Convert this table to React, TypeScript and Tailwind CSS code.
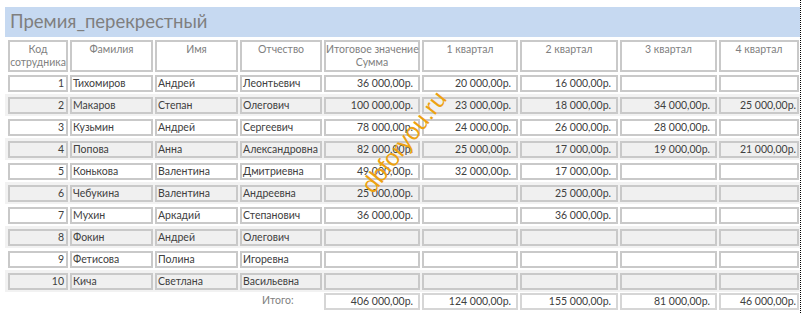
import React from 'react';

type Row = {
  id: number;
  last: string;
  first: string;
  middle: string;
  total: string;
  q: string[];
};

const rows: Row[] = [
  { id: 1, last: 'Тихомиров', first: 'Андрей', middle: 'Леонтьевич', total: '36 000,00р.', q: ['20 000,00р.', '16 000,00р.', '', ''] },
  { id: 2, last: 'Макаров', first: 'Степан', middle: 'Олегович', total: '100 000,00р.', q: ['23 000,00р.', '18 000,00р.', '34 000,00р.', '25 000,00р.'] },
  { id: 3, last: 'Кузьмин', first: 'Андрей', middle: 'Сергеевич', total: '78 000,00р.', q: ['24 000,00р.', '26 000,00р.', '28 000,00р.', ''] },
  { id: 4, last: 'Попова', first: 'Анна', middle: 'Александровна', total: '82 000,00р.', q: ['25 000,00р.', '17 000,00р.', '19 000,00р.', '21 000,00р.'] },
  { id: 5, last: 'Конькова', first: 'Валентина', middle: 'Дмитриевна', total: '49 000,00р.', q: ['32 000,00р.', '17 000,00р.', '', ''] },
  { id: 6, last: 'Чебукина', first: 'Валентина', middle: 'Андреевна', total: '25 000,00р.', q: ['', '25 000,00р.', '', ''] },
  { id: 7, last: 'Мухин', first: 'Аркадий', middle: 'Степанович', total: '36 000,00р.', q: ['', '36 000,00р.', '', ''] },
  { id: 8, last: 'Фокин', first: 'Андрей', middle: 'Олегович', total: '', q: ['', '', '', ''] },
  { id: 9, last: 'Фетисова', first: 'Полина', middle: 'Игоревна', total: '', q: ['', '', '', ''] },
  { id: 10, last: 'Кича', first: 'Светлана', middle: 'Васильевна', total: '', q: ['', '', '', ''] },
];

const totals = ['406 000,00р.', '124 000,00р.', '155 000,00р.', '81 000,00р.', '46 000,00р.'];

// box widths of the nine columns, 2px apart
const widths = ['w-[60px]', 'w-[83px]', 'w-[83px]', 'w-[82px]', 'w-[96px]', 'w-[96px]', 'w-[98px]', 'w-[97px]', 'w-[80px]'];

function Cell({ w, gray, right, children }: { w: string; gray?: boolean; right?: boolean; children?: React.ReactNode }) {
  return (
    <div
      className={`${w} h-[17px] shrink-0 border-2 border-[#c9c9c9] flex items-center overflow-hidden whitespace-nowrap text-[10.5px] leading-none text-[#404040] ${
        gray ? 'bg-[#f0f0f0]' : 'bg-white'
      } ${right ? 'justify-end pr-[5px]' : 'pl-[1px]'}`}
    >
      {children}
    </div>
  );
}

function HeadCell({ w, children }: { w: string; children: React.ReactNode }) {
  return (
    <div className={`${w} h-[32px] shrink-0 border-2 border-[#c9c9c9] bg-white pt-[1px] text-center whitespace-nowrap text-[10.5px] leading-[13px] text-[#7f7f7f]`}>
      {children}
    </div>
  );
}

export default function App() {
  return (
    <div className="relative w-[801px] h-[313px] overflow-hidden bg-white font-['Lato','Open_Sans',sans-serif]">
      <div className="w-[801px] h-[313px] border-r border-dotted border-black pl-[5px] pt-[7px]">
        {/* Title band */}
        <div className="h-[30px] bg-[#c6d9f1] pl-[5px] flex items-center text-[18.5px] text-[#7f7f7f]">
          Премия_перекрестный
        </div>

        {/* Column headers */}
        <div className="mt-[3px] flex gap-[2px] pl-[3px]">
          <HeadCell w={widths[0]}>Код<br />сотрудника</HeadCell>
          <HeadCell w={widths[1]}>Фамилия</HeadCell>
          <HeadCell w={widths[2]}>Имя</HeadCell>
          <HeadCell w={widths[3]}>Отчество</HeadCell>
          <HeadCell w={widths[4]}>Итоговое значение<br />Сумма</HeadCell>
          <HeadCell w={widths[5]}>1 квартал</HeadCell>
          <HeadCell w={widths[6]}>2 квартал</HeadCell>
          <HeadCell w={widths[7]}>3 квартал</HeadCell>
          <HeadCell w={widths[8]}>4 квартал</HeadCell>
        </div>

        {/* Data rows */}
        {rows.map((r, i) => {
          const gray = i % 2 === 1;
          return (
            <div key={r.id} className={`h-[22px] flex items-center gap-[2px] pl-[3px] ${gray ? 'bg-[#f2f2f2]' : ''}`}>
              <Cell w={widths[0]} gray={gray} right>
                <span className="-mr-[3px]">{r.id}</span>
              </Cell>
              <Cell w={widths[1]} gray={gray}>{r.last}</Cell>
              <Cell w={widths[2]} gray={gray}>{r.first}</Cell>
              <Cell w={widths[3]} gray={gray}>{r.middle}</Cell>
              <Cell w={widths[4]} gray={gray} right>{r.total}</Cell>
              <Cell w={widths[5]} gray={gray} right>{r.q[0]}</Cell>
              <Cell w={widths[6]} gray={gray} right>{r.q[1]}</Cell>
              <Cell w={widths[7]} gray={gray} right>{r.q[2]}</Cell>
              <Cell w={widths[8]} gray={gray} right>
                <span className="-mr-[4px]">{r.q[3]}</span>
              </Cell>
            </div>
          );
        })}

        {/* Totals */}
        <div className="h-[18px] flex items-center gap-[2px] pl-[3px]">
          <div className="w-[60px] shrink-0" />
          <div className="w-[83px] shrink-0" />
          <div className="w-[83px] shrink-0" />
          <div className="w-[82px] shrink-0 pl-[22px] text-[10.5px] text-[#7f7f7f]">Итого:</div>
          {totals.map((t, i) => (
            <div
              key={i}
              className={`${widths[4 + i]} h-[17px] shrink-0 border-2 border-[#d6d6d6] bg-white flex items-center justify-end text-[10.5px] leading-none text-[#404040] ${
                i === 4 ? 'pr-[1px]' : 'pr-[5px]'
              }`}
            >
              {t}
            </div>
          ))}
        </div>
      </div>

      {/* Watermark */}
      <span className="absolute left-[336px] top-[128px] w-[136px] text-center -rotate-[52deg] text-[24px] leading-[28px] text-[#eda212] font-['Liberation_Sans',sans-serif]">
        dbforyou.ru
      </span>
    </div>
  );
}
